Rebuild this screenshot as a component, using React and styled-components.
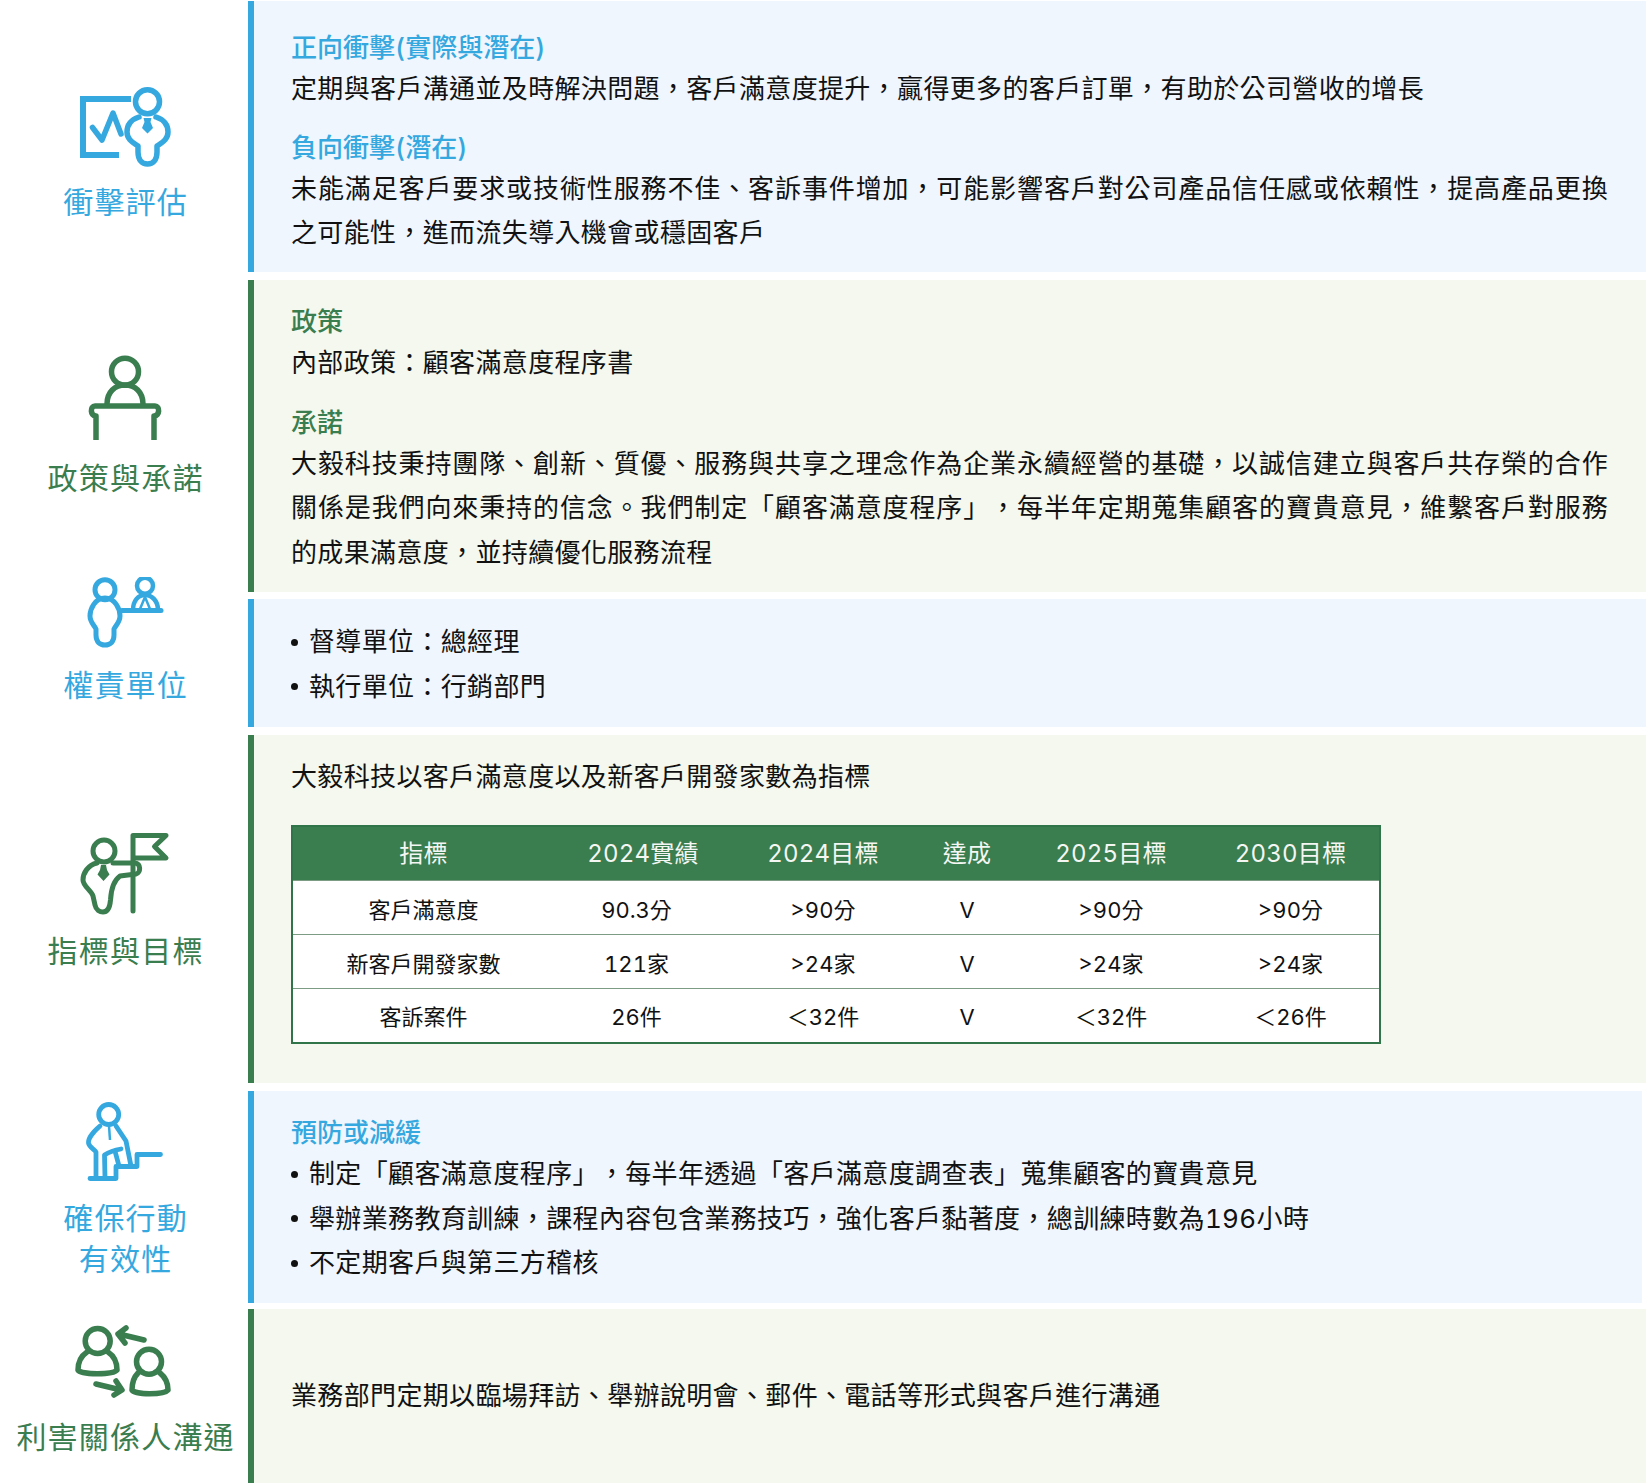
import React from 'react'
import styled, { createGlobalStyle } from 'styled-components'

const BLUE = '#35a8e0'
const GREEN = '#3a7d4f'
const FONT = '"Inter", "Noto Sans CJK TC", "Noto Sans", sans-serif'

const GlobalStyle = createGlobalStyle`
  html, body {
    margin: 0;
    padding: 0;
    background: #fff;
  }
  body {
    font-family: ${FONT};
    font-variant-numeric: tabular-nums;
    color: #111;
    text-spacing-trim: space-all;
  }
`

const Page = styled.div`
  display: flex;
  width: 1646px;
  height: 1484px;
  overflow: hidden;
`

const SideColumn = styled.aside`
  box-sizing: border-box;
  width: 248px;
  padding-left: 2px;
  flex: none;
  display: flex;
  flex-direction: column;
  align-items: center;
`

const SideBlock = styled.div`
  margin-top: ${(p) => p.$mt}px;
  display: flex;
  flex-direction: column;
  align-items: center;
  color: ${(p) => (p.$green ? GREEN : BLUE)};
`

const Icon = styled.svg`
  display: block;
  fill: none;
  stroke: currentColor;
  stroke-linecap: round;
  stroke-linejoin: round;
`

const SideLabel = styled.div`
  margin-top: ${(p) => p.$gap || 12}px;
  font-size: 30px;
  line-height: 41px;
  letter-spacing: 1.2px;
  margin-right: -1.2px;
  text-align: center;
  white-space: nowrap;
`

const Main = styled.main`
  flex: 1;
  min-width: 0;
  display: flex;
  flex-direction: column;
  padding-top: 1px;
`

const Row = styled.section`
  box-sizing: border-box;
  height: ${(p) => p.$h}px;
  margin-bottom: ${(p) => p.$mb}px;
  margin-right: ${(p) => p.$mr || 0}px;
  border-left: 6px solid ${(p) => (p.$green ? GREEN : BLUE)};
  background: ${(p) => (p.$green ? '#f4f8ee' : '#f0f6fd')};
  padding: ${(p) => p.$pt || 0}px 38px 0 37px;
  display: ${(p) => (p.$center ? 'flex' : 'block')};
  align-items: center;
`

const Heading = styled.h3`
  margin: ${(p) => p.$mt || 0}px 0 0;
  font-size: 26px;
  line-height: 39px;
  font-weight: 500;
  color: ${(p) => (p.$green ? GREEN : BLUE)};
`

const Text = styled.p`
  margin: 0;
  font-size: 26px;
  line-height: 44.5px;
  letter-spacing: 0.35px;
  text-align: justify;
`

const List = styled.ul`
  margin: 0;
  padding: 0;
  list-style: none;
`

const Item = styled.li`
  display: flex;
  align-items: center;
  font-size: 26px;
  line-height: 44.5px;
  letter-spacing: 0.35px;
  &::before {
    content: '';
    width: 7px;
    height: 7px;
    margin-right: 11px;
    border-radius: 50%;
    background: #111;
    flex: none;
  }
`

const Table = styled.table`
  box-sizing: border-box;
  width: 1090px;
  margin-top: 25px;
  border: 2px solid #2f7549;
  border-collapse: collapse;
  table-layout: fixed;
  background: #fff;
`

const Th = styled.th`
  box-sizing: border-box;
  height: 55px;
  padding: 2px 0 0;
  background: ${GREEN};
  color: #f4f6f3;
  font-size: 24px;
  line-height: 30px;
  font-weight: 400;
  letter-spacing: 0.2px;
  text-align: center;
`

const Td = styled.td`
  box-sizing: border-box;
  height: 54px;
  padding: 4px ${(p) => p.$inset || 0}px 0 0;
  font-size: 22px;
  line-height: 30px;
  text-align: center;
  border-top: 1px solid #7d9c84;
`

const columns = [262, 178, 182, 106, 182, 178]
const headers = ['指標', '2024實績', '2024目標', '達成', '2025目標', '2030目標']
const rows = [
  ['客戶滿意度', '90.3分', '>90分', 'V', '>90分', '>90分'],
  ['新客戶開發家數', '121家', '>24家', 'V', '>24家', '>24家'],
  ['客訴案件', '26件', '＜32件', 'V', '＜32件', '＜26件'],
]

const ImpactIcon = () => (
  <Icon width="98" height="88" viewBox="76 82 98 88" strokeWidth="5.5">
    <path d="M131 99H83V155H119" strokeWidth="6" strokeLinecap="butt" strokeLinejoin="miter" />
    <path d="M92.5 127.5L102 140L113 113L121 134" strokeWidth="5.5" />
    <circle cx="147.5" cy="101.7" r="12" />
    <path d="M139 117C130 120 127 126 127 132C127 140 134 143 138 146V152C138 160 142 164 147.5 164C153 164 157 160 157 152V146C161 143 168 140 168 132C168 126 165 120 156 117" />
    <path d="M143.5 118H151.5L150.5 122L153 128L147.5 133.5L142 128L144.5 122Z" fill="currentColor" stroke="none" />
  </Icon>
)

const PolicyIcon = () => (
  <Icon width="80" height="87" viewBox="85 353 80 87" strokeWidth="5.5">
    <circle cx="125" cy="371.7" r="13.5" />
    <path d="M107 404C107 392 115 385 125 385C135 385 143 392 143 404" strokeLinecap="butt" />
    <path d="M96 440V416C90 416 90 406 95 406H155C160 406 160 416 154 416V440" strokeLinecap="butt" />
  </Icon>
)

const DutyIcon = () => (
  <Icon width="80" height="72" viewBox="85 578 80 72" strokeWidth="5">
    <circle cx="105" cy="590.7" r="10" />
    <path d="M105 599C95 599 90 610 90 617C90 623 94 626 96 630V636C96 643 100 646 105 646C110 646 114 643 114 636V630C116 626 120 623 120 617C120 610 115 599 105 599Z" />
    <circle cx="145" cy="586.7" r="8" strokeWidth="4.5" />
    <path d="M133 611C133 602 138 596 145 596C152 596 158 602 158 611" strokeWidth="4.5" strokeLinecap="butt" />
    <path d="M122 611.5H161" />
    <path d="M145 598L140 610M145 598L150 610" strokeWidth="2.5" strokeLinecap="butt" />
  </Icon>
)

const TargetIcon = () => (
  <Icon width="92" height="82" viewBox="79 832 92 82" strokeWidth="5">
    <circle cx="104" cy="850" r="11" />
    <path d="M133 910V834.5H166L154.5 845.5L166 857H133" />
    <path d="M97 862C88 864 83 872 83 879C83 885 91 889 93 895L95 904C96 909 100 911 103 911C108 911 110 905 110.5 899C111 890 113 880 120 875L136 873C141 872 141 862 135 862H113" />
    <path d="M101 864H106L107 869L109.5 873.5L103.5 880L97.5 873.5L100 869Z" fill="currentColor" stroke="none" />
  </Icon>
)

const ActionIcon = () => (
  <Icon width="80" height="84" viewBox="84 1099 80 84" strokeWidth="4.8">
    <circle cx="107.7" cy="1113.5" r="10" />
    <path d="M99 1125C92 1131 87 1138 87.5 1142C88 1146 93 1148 95 1151V1177" />
    <path d="M115 1125L125 1140L130 1165" />
    <path d="M104 1177L103.5 1154C108 1151 114 1149 120 1148" />
    <path d="M114 1150L118 1165" />
    <path d="M89 1177.5H115V1165.5H136V1153.5H159.5" />
    <path d="M108 1125L109 1139" strokeWidth="2.5" strokeLinecap="butt" />
  </Icon>
)

const CommunicateIcon = () => (
  <Icon width="100" height="76" viewBox="74 1323 100 76" strokeWidth="5.5">
    <circle cx="96.7" cy="1340" r="12.5" />
    <path d="M86 1351C80 1355 77 1362 77 1369C80 1374 112 1374 116 1369C116 1362 113 1355 107 1351" />
    <circle cx="148" cy="1360.7" r="12.5" />
    <path d="M137 1372C133 1376 131 1382 131 1389C134 1394 163 1394 167 1389C167 1382 164 1376 159 1372" />
    <path d="M143 1339L118 1333M125 1327L117 1333L124 1342" />
    <path d="M95 1383L120 1389M115 1380L121 1389L113 1394" />
  </Icon>
)

export default function App() {
  return (
    <Page>
      <GlobalStyle />
      <SideColumn>
        <SideBlock $mt={82}>
          <ImpactIcon />
          <SideLabel>衝擊評估</SideLabel>
        </SideBlock>
        <SideBlock $mt={130} $green>
          <PolicyIcon />
          <SideLabel $gap={18}>政策與承諾</SideLabel>
        </SideBlock>
        <SideBlock $mt={78}>
          <DutyIcon />
          <SideLabel $gap={16}>權責單位</SideLabel>
        </SideBlock>
        <SideBlock $mt={127} $green>
          <TargetIcon />
          <SideLabel $gap={16}>指標與目標</SideLabel>
        </SideBlock>
        <SideBlock $mt={128}>
          <ActionIcon />
          <SideLabel $gap={14}>
            確保行動
            <br />
            有效性
          </SideLabel>
        </SideBlock>
        <SideBlock $mt={44} $green>
          <CommunicateIcon />
          <SideLabel $gap={17}>利害關係人溝通</SideLabel>
        </SideBlock>
      </SideColumn>

      <Main>
        <Row $h={271} $mb={8} $pt={27}>
          <Heading>正向衝擊(實際與潛在)</Heading>
          <Text>定期與客戶溝通並及時解決問題，客戶滿意度提升，贏得更多的客戶訂單，有助於公司營收的增長</Text>
          <Heading $mt={16}>負向衝擊(潛在)</Heading>
          <Text>未能滿足客戶要求或技術性服務不佳、客訴事件增加，可能影響客戶對公司產品信任感或依賴性，提高產品更換之可能性，進而流失導入機會或穩固客戶</Text>
        </Row>
        <Row $h={312} $mb={7} $green $pt={22}>
          <Heading $green>政策</Heading>
          <Text>內部政策：顧客滿意度程序書</Text>
          <Heading $green $mt={17}>承諾</Heading>
          <Text>大毅科技秉持團隊、創新、質優、服務與共享之理念作為企業永續經營的基礎，以誠信建立與客戶共存榮的合作關係是我們向來秉持的信念。我們制定「顧客滿意度程序」，每半年定期蒐集顧客的寶貴意見，維繫客戶對服務的成果滿意度，並持續優化服務流程</Text>
        </Row>
        <Row $h={128} $mb={8} $pt={21}>
          <List>
            <Item>督導單位：總經理</Item>
            <Item>執行單位：行銷部門</Item>
          </List>
        </Row>
        <Row $h={348} $mb={8} $green $pt={20}>
          <Text>大毅科技以客戶滿意度以及新客戶開發家數為指標</Text>
          <Table>
            <colgroup>
              {columns.map((w, i) => (
                <col key={i} style={{ width: w }} />
              ))}
            </colgroup>
            <thead>
              <tr>
                {headers.map((h) => (
                  <Th key={h}>{h}</Th>
                ))}
              </tr>
            </thead>
            <tbody>
              {rows.map((r) => (
                <tr key={r[0]}>
                  {r.map((c, i) => (
                    <Td key={i} $inset={i === 1 ? 13 : 0}>{c}</Td>
                  ))}
                </tr>
              ))}
            </tbody>
          </Table>
        </Row>
        <Row $h={212} $mb={6} $mr={4} $pt={22}>
          <Heading>預防或減緩</Heading>
          <List>
            <Item>制定「顧客滿意度程序」，每半年透過「客戶滿意度調查表」蒐集顧客的寶貴意見</Item>
            <Item>舉辦業務教育訓練，課程內容包含業務技巧，強化客戶黏著度，總訓練時數為196小時</Item>
            <Item>不定期客戶與第三方稽核</Item>
          </List>
        </Row>
        <Row $h={174} $mb={0} $green $center>
          <Text>業務部門定期以臨場拜訪、舉辦說明會、郵件、電話等形式與客戶進行溝通</Text>
        </Row>
      </Main>
    </Page>
  )
}
